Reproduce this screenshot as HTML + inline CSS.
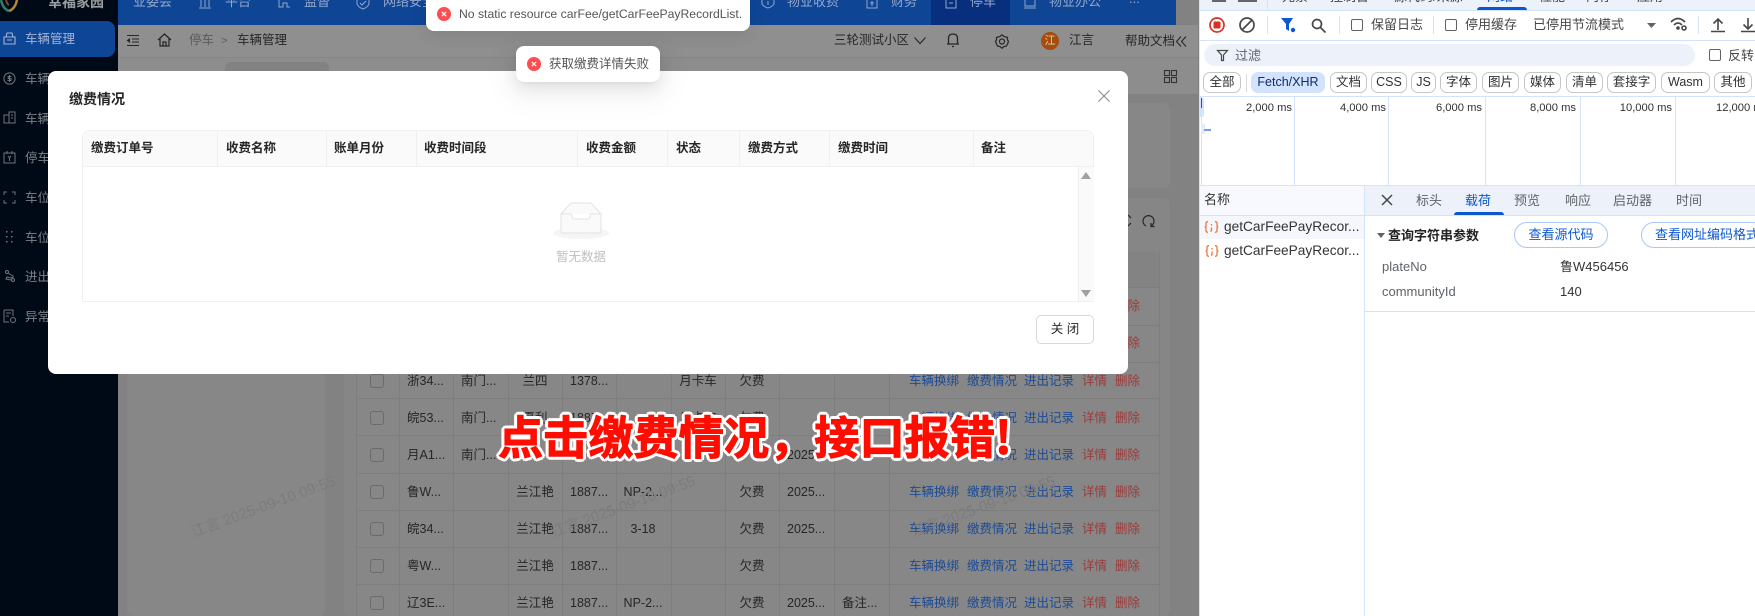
<!DOCTYPE html>
<html lang="zh"><head><meta charset="utf-8"><title>车辆管理</title>
<style>
*{box-sizing:border-box}
html,body{margin:0;padding:0;width:1755px;height:616px;overflow:hidden;background:#828282}
body{position:relative;font:12.5px/16px "Liberation Sans","Noto Sans CJK SC",sans-serif;color:#222}
.a,.t{position:absolute}
.t{white-space:nowrap;line-height:16px}
svg{position:absolute;overflow:visible}
.side{color:#7d8287;font-size:12.5px}
.nav{color:#93a7cc;font-size:13px}
.r{position:absolute;left:356px;width:803px;height:1px;background:#7d7d7d}
.v{position:absolute;top:252px;height:364px;width:1px;background:#7e7e7e}
.cell{color:#262626}
.ctr{transform:translateX(-50%)}
.b{color:#1b4b95}.d{color:#9c3a3a}
.cb{position:absolute;left:370px;width:14px;height:14px;border:1px solid #6b6b6b;border-radius:3px}
.wm{position:absolute;color:#7c7c7c;font-size:15px;transform:rotate(-20deg);transform-origin:0 0;white-space:nowrap}
.th{font-weight:bold;color:#262626;top:140px}
.vl{position:absolute;top:131px;height:35px;width:1px;background:#f0f0f0}
.dv{position:absolute;background:#d3e3fd}
.dt{font-size:13px;color:#474747}
.chip{position:absolute;top:72px;height:21px;border:1px solid #c4c7c5;border-radius:7px;text-align:center;line-height:19px;font-size:12.5px;color:#303030}
.ck{position:absolute;width:12px;height:12px;border:1.3px solid #5f6368;border-radius:2px}
.tl{position:absolute;top:97px;height:88px;width:1px;background:#d3e3fd}
.ms{position:absolute;top:100px;font-size:11.2px;color:#303030;text-align:right;width:90px;white-space:nowrap}
.tab{font-size:13px;color:#5f6368;top:193px}
.clip{color:#444;font-size:13px;top:-11px}
</style></head><body>

<!-- sidebar -->
<div class="a" style="left:0;top:0;width:118px;height:616px;background:#000a17"></div>
<svg style="left:0;top:0" width="20" height="14"><path d="M1 0Q3 9 9 11" stroke="#2e7d6b" stroke-width="2.5" fill="none"/><path d="M17 0Q15 9 9 11" stroke="#b28a2e" stroke-width="2.5" fill="none"/><path d="M6 0Q7 4 9 5" stroke="#7c4a34" stroke-width="2" fill="none"/></svg>
<div class="t" style="left:48px;top:-6px;font-weight:bold;font-size:14px;color:#9a9da0">幸福家园</div>
<div class="a" style="left:0;top:21px;width:115px;height:36px;background:#0e4595;border-radius:0 8px 8px 0"></div>
<svg style="left:3px;top:32px" width="13" height="14" fill="none" stroke="#a3b5d3" stroke-width="1.1"><path d="M3 5L4 1H9L10 5M1 5H12V12H1ZM4 8H9"/></svg>
<div class="t" style="left:25px;top:31px;color:#a3b5d3">车辆管理</div>
<svg style="left:3px;top:72px" width="13" height="13" fill="none" stroke="#6f7479"><circle cx="6.5" cy="6.5" r="5.6"/><path d="M8.5 4.5H5.2V6.5H8V8.5H4.5M6.5 3V10"/></svg>
<div class="t side" style="left:25px;top:71px">车辆</div>
<svg style="left:3px;top:111px" width="13" height="13" fill="none" stroke="#6f7479"><path d="M1 4H6V12H1ZM6 1H12V12H6ZM8 4H10M8 7H10"/></svg>
<div class="t side" style="left:25px;top:111px">车辆</div>
<svg style="left:3px;top:151px" width="13" height="13" fill="none" stroke="#6f7479"><path d="M1 2H12V12H1ZM4 0V3M9 0V3M5 5L6.5 7L8 5M6.5 7V10"/></svg>
<div class="t side" style="left:25px;top:150px">停车</div>
<svg style="left:3px;top:191px" width="13" height="13" fill="none" stroke="#6f7479"><path d="M1 4V1H4M9 1H12V4M1 9V12H4M9 12H12V9"/></svg>
<div class="t side" style="left:25px;top:190px">车位</div>
<svg style="left:6px;top:231px" width="8" height="12" fill="#6f7479"><rect x="0" y="0" width="1.5" height="1.5"/><rect x="5" y="0" width="1.5" height="1.5"/><rect x="0" y="5" width="1.5" height="1.5"/><rect x="5" y="5" width="1.5" height="1.5"/><rect x="0" y="10" width="1.5" height="1.5"/><rect x="5" y="10" width="1.5" height="1.5"/></svg>
<div class="t side" style="left:25px;top:230px">车位</div>
<svg style="left:4px;top:270px" width="12" height="12" fill="none" stroke="#6f7479"><circle cx="3" cy="2" r="1.5"/><circle cx="9" cy="10" r="1.5"/><path d="M4 3L9 6Q10 7 7 8L3 7L2 9L7 10"/></svg>
<div class="t side" style="left:25px;top:269px">进出</div>
<svg style="left:3px;top:310px" width="13" height="13" fill="none" stroke="#6f7479"><path d="M1 0H10V6M1 0V12H6M3 3H8M3 6H6"/><circle cx="10" cy="10" r="2.5"/></svg>
<div class="t side" style="left:25px;top:309px">异常</div>

<!-- top nav -->
<div class="a" style="left:118px;top:0;width:1058px;height:25px;background:#0e4595"></div>
<div class="a" style="left:931px;top:0;width:79px;height:25px;background:#072f7e"></div>
<div class="t nav" style="left:133px;top:-6px">业委会</div>
<svg style="left:199px;top:0" width="13" height="9" fill="none" stroke="#93a7cc"><path d="M2 0V7M6 0V7M10 0V7M0 8H12"/></svg>
<div class="t nav" style="left:225px;top:-6px">平台</div>
<svg style="left:278px;top:0" width="13" height="9" fill="none" stroke="#93a7cc"><path d="M1 0V7H5V3H9V7H12"/></svg>
<div class="t nav" style="left:304px;top:-6px">监督</div>
<svg style="left:357px;top:0" width="12" height="10" fill="none" stroke="#93a7cc"><path d="M0 0V4Q1 7 6 9Q11 7 12 4V0M3 3L5 5L9 1"/></svg>
<div class="t nav" style="left:383px;top:-6px">网络安全</div>
<svg style="left:762px;top:0" width="12" height="9" fill="none" stroke="#93a7cc"><path d="M0 0V4Q2 7 6 8Q10 7 12 4V0M6 1V5"/></svg>
<div class="t nav" style="left:787px;top:-6px">物业收费</div>
<svg style="left:866px;top:0" width="12" height="9" fill="none" stroke="#93a7cc"><path d="M1 0V8H11V0M6 1V6M4 3H8"/></svg>
<div class="t nav" style="left:891px;top:-6px">财务</div>
<svg style="left:945px;top:0" width="12" height="9" fill="none" stroke="#93a7cc"><path d="M1 0V8H11V0M4 3H8"/></svg>
<div class="t nav" style="left:970px;top:-6px">停车</div>
<svg style="left:1024px;top:0" width="13" height="9" fill="none" stroke="#93a7cc"><path d="M1 0V6H11V0M0 8H12"/></svg>
<div class="t nav" style="left:1049px;top:-6px">物业办公</div>
<div class="t nav" style="left:1129px;top:-9px">...</div>

<!-- header -->
<div class="a" style="left:118px;top:25px;width:1080px;height:32px;background:#8f8f8f"></div>
<div class="a" style="left:118px;top:57px;width:1080px;height:1px;background:#868686"></div>
<div class="a" style="left:118px;top:58px;width:1080px;height:36px;background:#8d8d8d"></div>
<div class="a" style="left:225px;top:62px;width:104px;height:32px;background:#828282;border-radius:6px 6px 0 0"></div>
<svg style="left:127px;top:35px" width="13" height="11" fill="none" stroke="#262626" stroke-width="1.1"><path d="M0 .5H12M5 4H12M5 7H12M0 10.5H12"/><path d="M3 3.5L.5 5.5L3 7.5" fill="#262626"/></svg>
<svg style="left:158px;top:33px" width="13" height="14" fill="none" stroke="#262626" stroke-width="1.2"><path d="M0 7L6.5 1L13 7M2 5.5V13H11V5.5M5 13V9H8V13"/></svg>
<div class="t" style="left:189px;top:32px;color:#5b5b5b">停车</div>
<div class="t" style="left:221px;top:33px;color:#5b5b5b;font-size:11px">&gt;</div>
<div class="t" style="left:237px;top:32px;color:#262626">车辆管理</div>
<div class="t" style="left:834px;top:32px;color:#262626">三轮测试小区</div>
<svg style="left:914px;top:37px" width="12" height="7" fill="none" stroke="#262626" stroke-width="1.1"><path d="M.5 .5L6 6.5L11.5 .5"/></svg>
<svg style="left:947px;top:33px" width="12" height="14" fill="none" stroke="#262626" stroke-width="1.3"><path d="M1.5 11V5.5Q1.5 1 6 1Q10.5 1 10.5 5.5V11ZM0 11H12M5 13.5H7"/></svg>
<svg style="left:995px;top:34px" width="14" height="15" fill="none" stroke="#262626" stroke-width="1.2"><path d="M7 .8L9 2.5L12.5 3.5L12.5 6L13.5 7.5L12.5 10L11.5 12L9 12.5L7 14.2L5 12.5L2.5 12L1.5 10L.5 7.5L1.5 6L1.5 3.5L5 2.5Z"/><circle cx="7" cy="7.5" r="2.5"/></svg>
<div class="a" style="left:1041px;top:32px;width:18px;height:18px;border-radius:50%;background:#a34e0e;color:#e3c9a8;font-size:11px;text-align:center;line-height:18px">江</div>
<div class="t" style="left:1069px;top:32px;color:#262626">江言</div>
<div class="t" style="left:1125px;top:33px;color:#262626">帮助文档</div>
<svg style="left:1176px;top:36px" width="11" height="11" fill="none" stroke="#262626" stroke-width="1.1"><path d="M5 .5L.5 5.5L5 10.5M10 .5L5.5 5.5L10 10.5"/></svg>
<svg style="left:1164px;top:70px" width="13" height="13" fill="none" stroke="#333" stroke-width="1.1"><rect x=".5" y=".5" width="5" height="5"/><rect x="7.5" y=".5" width="5" height="5"/><rect x=".5" y="7.5" width="5" height="5"/><rect x="7.5" y="7.5" width="5" height="5"/></svg>

<!-- content panels -->
<div class="a" style="left:118px;top:94px;width:1080px;height:522px;background:#828282"></div>
<div class="a" style="left:127px;top:103px;width:1043px;height:85px;background:#878787;border-radius:6px"></div>
<div class="a" style="left:127px;top:198px;width:198px;height:418px;background:#878787;border-radius:6px"></div>
<div class="a" style="left:344px;top:198px;width:826px;height:418px;background:#868686;border-radius:6px"></div>
<div class="a" style="left:356px;top:252px;width:803px;height:364px;background:#878787;border-radius:6px 6px 0 0"></div>
<div class="a" style="left:356px;top:252px;width:803px;height:35px;background:#838383;border-radius:6px 6px 0 0"></div>
<svg style="left:1142px;top:214px" width="13" height="13" fill="none" stroke="#262626" stroke-width="1.2"><path d="M4 12A5.5 5.5 0 1 1 9 12M9 9V12.5H12.5"/></svg>
<svg style="left:1128px;top:214px" width="6" height="13" fill="none" stroke="#262626" stroke-width="1.2"><path d="M0 1L3 4M0 12L3 9"/></svg>

<div class="r" style="top:287px"></div><div class="r" style="top:325px"></div><div class="r" style="top:362px"></div><div class="r" style="top:398px"></div><div class="r" style="top:435px"></div><div class="r" style="top:473px"></div><div class="r" style="top:510px"></div><div class="r" style="top:547px"></div><div class="r" style="top:584px"></div>
<div class="v" style="left:356px"></div><div class="v" style="left:399px"></div><div class="v" style="left:453px"></div><div class="v" style="left:508px"></div><div class="v" style="left:562px"></div><div class="v" style="left:616px"></div><div class="v" style="left:671px"></div><div class="v" style="left:725px"></div><div class="v" style="left:779px"></div><div class="v" style="left:834px"></div><div class="v" style="left:889px"></div><div class="v" style="left:1159px"></div>

<!-- row action fragments above modal edge -->
<div class="t d" style="left:1115px;top:298px">删除</div>
<div class="t d" style="left:1115px;top:335px">删除</div>

<!-- rows -->
<div class="cb" style="top:374px"></div>
<div class="t cell" style="left:407px;top:373px">浙34...</div><div class="t cell" style="left:461px;top:373px">南门...</div><div class="t cell ctr" style="left:535px;top:373px">兰四</div><div class="t cell" style="left:570px;top:373px">1378...</div><div class="t cell ctr" style="left:698px;top:373px">月卡车</div><div class="t cell ctr" style="left:752px;top:373px">欠费</div>
<div class="t b" style="left:909px;top:373px">车辆换绑</div><div class="t b" style="left:967px;top:373px">缴费情况</div><div class="t b" style="left:1024px;top:373px">进出记录</div><div class="t d" style="left:1082px;top:373px">详情</div><div class="t d" style="left:1115px;top:373px">删除</div>

<div class="cb" style="top:411px"></div>
<div class="t cell" style="left:407px;top:410px">皖53...</div><div class="t cell" style="left:461px;top:410px">南门...</div><div class="t cell ctr" style="left:535px;top:410px">夏利</div><div class="t cell" style="left:570px;top:410px">1887...</div><div class="t cell ctr" style="left:698px;top:410px">月卡车</div><div class="t cell ctr" style="left:752px;top:410px">欠费</div>
<div class="t b" style="left:909px;top:410px">车辆换绑</div><div class="t b" style="left:967px;top:410px">缴费情况</div><div class="t b" style="left:1024px;top:410px">进出记录</div><div class="t d" style="left:1082px;top:410px">详情</div><div class="t d" style="left:1115px;top:410px">删除</div>

<div class="cb" style="top:448px"></div>
<div class="t cell" style="left:407px;top:447px">月A1...</div><div class="t cell" style="left:461px;top:447px">南门...</div><div class="t cell" style="left:787px;top:447px">2025...</div>
<div class="t b" style="left:967px;top:447px">缴费情况</div><div class="t b" style="left:1024px;top:447px">进出记录</div><div class="t d" style="left:1082px;top:447px">详情</div><div class="t d" style="left:1115px;top:447px">删除</div>

<div class="cb" style="top:485px"></div>
<div class="t cell" style="left:407px;top:484px">鲁W...</div><div class="t cell ctr" style="left:535px;top:484px">兰江艳</div><div class="t cell" style="left:570px;top:484px">1887...</div><div class="t cell ctr" style="left:643px;top:484px">NP-2...</div><div class="t cell ctr" style="left:752px;top:484px">欠费</div><div class="t cell" style="left:787px;top:484px">2025...</div>
<div class="t b" style="left:909px;top:484px">车辆换绑</div><div class="t b" style="left:967px;top:484px">缴费情况</div><div class="t b" style="left:1024px;top:484px">进出记录</div><div class="t d" style="left:1082px;top:484px">详情</div><div class="t d" style="left:1115px;top:484px">删除</div>

<div class="cb" style="top:522px"></div>
<div class="t cell" style="left:407px;top:521px">皖34...</div><div class="t cell ctr" style="left:535px;top:521px">兰江艳</div><div class="t cell" style="left:570px;top:521px">1887...</div><div class="t cell ctr" style="left:643px;top:521px">3-18</div><div class="t cell ctr" style="left:752px;top:521px">欠费</div><div class="t cell" style="left:787px;top:521px">2025...</div>
<div class="t b" style="left:909px;top:521px">车辆换绑</div><div class="t b" style="left:967px;top:521px">缴费情况</div><div class="t b" style="left:1024px;top:521px">进出记录</div><div class="t d" style="left:1082px;top:521px">详情</div><div class="t d" style="left:1115px;top:521px">删除</div>

<div class="cb" style="top:559px"></div>
<div class="t cell" style="left:407px;top:558px">粤W...</div><div class="t cell ctr" style="left:535px;top:558px">兰江艳</div><div class="t cell" style="left:570px;top:558px">1887...</div><div class="t cell ctr" style="left:752px;top:558px">欠费</div>
<div class="t b" style="left:909px;top:558px">车辆换绑</div><div class="t b" style="left:967px;top:558px">缴费情况</div><div class="t b" style="left:1024px;top:558px">进出记录</div><div class="t d" style="left:1082px;top:558px">详情</div><div class="t d" style="left:1115px;top:558px">删除</div>

<div class="cb" style="top:596px"></div>
<div class="t cell" style="left:407px;top:595px">辽3E...</div><div class="t cell ctr" style="left:535px;top:595px">兰江艳</div><div class="t cell" style="left:570px;top:595px">1887...</div><div class="t cell ctr" style="left:643px;top:595px">NP-2...</div><div class="t cell ctr" style="left:752px;top:595px">欠费</div><div class="t cell" style="left:787px;top:595px">2025...</div><div class="t cell" style="left:842px;top:595px">备注...</div>
<div class="t b" style="left:909px;top:595px">车辆换绑</div><div class="t b" style="left:967px;top:595px">缴费情况</div><div class="t b" style="left:1024px;top:595px">进出记录</div><div class="t d" style="left:1082px;top:595px">详情</div><div class="t d" style="left:1115px;top:595px">删除</div>

<!-- watermarks -->
<div class="wm" style="left:189px;top:526px">江言 2025-09-10 09:55</div>
<div class="wm" style="left:549px;top:526px">江言 2025-09-10 09:55</div>
<div class="wm" style="left:909px;top:526px">江言 2025-09-10 09:55</div>

<!-- modal -->
<div class="a" style="left:48px;top:71px;width:1080px;height:303px;background:#fff;border-radius:8px"></div>
<div class="t" style="left:69px;top:91px;font-size:14px;font-weight:bold;color:#262626">缴费情况</div>
<svg style="left:1098px;top:90px" width="12" height="12" fill="none" stroke="#8c8c8c" stroke-width="1.1"><path d="M.5 .5L11.5 11.5M11.5 .5L.5 11.5"/></svg>
<div class="a" style="left:82px;top:130px;width:1012px;height:172px;border:1px solid #f0f0f0;border-radius:8px 8px 0 0"></div>
<div class="a" style="left:83px;top:131px;width:1010px;height:36px;background:#fafafa;border-radius:8px 8px 0 0;border-bottom:1px solid #f0f0f0"></div>
<div class="vl" style="left:217px"></div><div class="vl" style="left:326px"></div><div class="vl" style="left:416px"></div><div class="vl" style="left:577px"></div><div class="vl" style="left:667px"></div><div class="vl" style="left:739px"></div><div class="vl" style="left:829px"></div><div class="vl" style="left:973px"></div>
<div class="t th" style="left:91px">缴费订单号</div><div class="t th" style="left:226px">收费名称</div><div class="t th" style="left:334px">账单月份</div><div class="t th" style="left:424px">收费时间段</div><div class="t th" style="left:586px">收费金额</div><div class="t th" style="left:676px">状态</div><div class="t th" style="left:748px">缴费方式</div><div class="t th" style="left:838px">缴费时间</div><div class="t th" style="left:981px">备注</div>
<div class="a" style="left:1078px;top:167px;width:16px;height:134px;background:#fafafa;border-left:1px solid #f0f0f0"></div>
<svg style="left:1081px;top:172px" width="10" height="8"><path d="M5 0L10 7H0Z" fill="#a0a0a0"/></svg>
<svg style="left:1081px;top:290px" width="10" height="8"><path d="M0 0H10L5 7Z" fill="#a0a0a0"/></svg>
<svg style="left:552px;top:202px" width="58" height="38"><ellipse cx="29" cy="31" rx="28" ry="6" fill="#f5f5f5"/><path d="M19 1H39L49 12V29Q49 31 47 31H11Q9 31 9 29V12Z" fill="#fafafa" stroke="#e3e3e3"/><path d="M9 12H19Q20 12 20 14Q20 17 23 17H35Q38 17 38 14Q38 12 39 12H49" fill="#fff" stroke="#e3e3e3"/></svg>
<div class="t" style="left:556px;top:249px;color:#bfbfbf">暂无数据</div>
<div class="a" style="left:1036px;top:315px;width:58px;height:29px;border:1px solid #d9d9d9;border-radius:5px;text-align:center;line-height:27px;color:#262626;font-size:12.5px">关 闭</div>

<!-- toasts -->
<div class="a" style="left:426px;top:-10px;width:324px;height:41px;background:#fff;border-radius:8px;box-shadow:0 6px 16px rgba(0,0,0,.08)"></div>
<svg style="left:437px;top:7px" width="14" height="14"><circle cx="7" cy="7" r="7" fill="#ff4d4f"/><path d="M4.8 4.8L9.2 9.2M9.2 4.8L4.8 9.2" stroke="#fff" stroke-width="1.2"/></svg>
<div class="t" style="left:459px;top:6px;color:#555;font-size:12.2px">No static resource carFee/getCarFeePayRecordList.</div>
<div class="a" style="left:516px;top:46px;width:144px;height:36px;background:#fff;border-radius:8px;box-shadow:0 6px 16px rgba(0,0,0,.08),0 3px 6px -4px rgba(0,0,0,.12),0 9px 28px 8px rgba(0,0,0,.05)"></div>
<svg style="left:527px;top:57px" width="14" height="14"><circle cx="7" cy="7" r="7" fill="#ff4d4f"/><path d="M4.8 4.8L9.2 9.2M9.2 4.8L4.8 9.2" stroke="#fff" stroke-width="1.2"/></svg>
<div class="t" style="left:549px;top:56px;color:#555">获取缴费详情失败</div>

<!-- annotation -->
<div class="t" style="left:498px;top:409px;font:bold 45.2px/54px 'Noto Sans CJK SC',sans-serif;color:#ff0d00;-webkit-text-stroke:1px #ff0d00;text-shadow:3.5px 0 0 #fff,3.1px 1.7px 0 #fff,1.7px 3.1px 0 #fff,0 3.5px 0 #fff,-1.7px 3.1px 0 #fff,-3.1px 1.7px 0 #fff,-3.5px 0 0 #fff,-3.1px -1.7px 0 #fff,-1.7px -3.1px 0 #fff,0 -3.5px 0 #fff,1.7px -3.1px 0 #fff,3.1px -1.7px 0 #fff">点击缴费情况，接口报错!</div>

<!-- devtools -->
<div class="a" style="left:1199px;top:0;width:556px;height:616px;background:#fff;border-left:1px solid #d3e3fd;overflow:hidden"></div>
<div class="a" style="left:1200px;top:0;width:555px;height:10px;background:#edf2fa;overflow:hidden"></div>
<div class="dv" style="left:1200px;top:10px;width:555px;height:1px"></div>
<div class="t clip" style="left:1282px">元素</div><div class="t clip" style="left:1330px">控制台</div><div class="t clip" style="left:1394px">源代码/来源</div><div class="t clip" style="left:1487px;color:#0b57d0">网络</div><div class="t clip" style="left:1539px">性能</div><div class="t clip" style="left:1586px">内存</div><div class="t clip" style="left:1637px">应用</div>
<div class="a" style="left:1212px;top:0;width:14px;height:2px;background:#666"></div>
<div class="a" style="left:1238px;top:0;width:19px;height:2px;background:#666"></div>
<div class="dv" style="left:1267px;top:0;width:1px;height:10px"></div>
<div class="a" style="left:1477px;top:7px;width:50px;height:3px;background:#0b57d0;border-radius:3px 3px 0 0"></div>

<svg style="left:1209px;top:17px" width="16" height="16"><circle cx="8" cy="8" r="7" fill="none" stroke="#d93025" stroke-width="1.7"/><rect x="4.5" y="4.5" width="7" height="7" rx="1" fill="#d93025"/></svg>
<svg style="left:1239px;top:17px" width="16" height="16" fill="none" stroke="#474747" stroke-width="1.7"><circle cx="8" cy="8" r="7"/><path d="M3 13L13 3"/></svg>
<div class="dv" style="left:1267px;top:16px;width:1px;height:18px"></div>
<svg style="left:1281px;top:18px" width="15" height="15"><path d="M0 0H12L8 6V13L5 11V6Z" fill="#0b57d0"/><circle cx="12" cy="12" r="2.2" fill="#0b57d0"/></svg>
<svg style="left:1311px;top:18px" width="15" height="15" fill="none" stroke="#474747" stroke-width="1.7"><circle cx="6" cy="6" r="4.5"/><path d="M9.5 9.5L14.5 14.5"/></svg>
<div class="dv" style="left:1339px;top:16px;width:1px;height:18px"></div>
<div class="ck" style="left:1351px;top:19px"></div>
<div class="t dt" style="left:1371px;top:17px">保留日志</div>
<div class="dv" style="left:1433px;top:16px;width:1px;height:18px"></div>
<div class="ck" style="left:1445px;top:19px"></div>
<div class="t dt" style="left:1465px;top:17px">停用缓存</div>
<div class="t dt" style="left:1533px;top:17px">已停用节流模式</div>
<svg style="left:1647px;top:23px" width="10" height="6"><path d="M0 0H9L4.5 5Z" fill="#5f6368"/></svg>
<svg style="left:1670px;top:16px" width="18" height="16" fill="none" stroke="#474747" stroke-width="1.6"><path d="M1 6Q8 -1 15 6M4 9Q8 5 12 9"/><circle cx="8" cy="12" r="1" fill="#474747"/><circle cx="14" cy="12" r="2"/></svg>
<div class="dv" style="left:1698px;top:16px;width:1px;height:18px"></div>
<svg style="left:1711px;top:17px" width="14" height="16" fill="none" stroke="#474747" stroke-width="1.6"><path d="M7 13V2M2.5 6.5L7 2L11.5 6.5M0 14.5H14"/></svg>
<svg style="left:1741px;top:17px" width="14" height="16" fill="none" stroke="#474747" stroke-width="1.6"><path d="M7 1V12M2.5 7.5L7 12L11.5 7.5M0 14.5H14"/></svg>
<div class="dv" style="left:1200px;top:40px;width:555px;height:1px"></div>

<div class="a" style="left:1204px;top:44px;width:491px;height:22px;background:#edf2fa;border-radius:11px"></div>
<svg style="left:1217px;top:50px" width="11" height="11"><path d="M.5 .5H10.5L6.5 5V10.5H4.5V5Z" fill="none" stroke="#474747" stroke-width="1.2"/></svg>
<div class="t dt" style="left:1235px;top:48px;color:#5f6368">过滤</div>
<div class="ck" style="left:1709px;top:49px"></div>
<div class="t dt" style="left:1728px;top:48px">反转</div>

<div class="chip" style="left:1203px;width:38px">全部</div>
<div class="dv" style="left:1246px;top:74px;width:1px;height:18px;background:#d9d9d9"></div>
<div class="chip" style="left:1251px;width:74px;background:#d3e3fd;border-color:#d3e3fd;color:#0b2e6b">Fetch/XHR</div>
<div class="chip" style="left:1330px;width:37px">文档</div>
<div class="chip" style="left:1371px;width:36px">CSS</div>
<div class="chip" style="left:1411px;width:25px">JS</div>
<div class="chip" style="left:1440px;width:37px">字体</div>
<div class="chip" style="left:1482px;width:37px">图片</div>
<div class="chip" style="left:1524px;width:37px">媒体</div>
<div class="chip" style="left:1566px;width:37px">清单</div>
<div class="chip" style="left:1607px;width:49px">套接字</div>
<div class="chip" style="left:1661px;width:49px">Wasm</div>
<div class="chip" style="left:1714px;width:38px">其他</div>
<div class="dv" style="left:1200px;top:96px;width:555px;height:1px"></div>

<div class="tl" style="left:1201px"></div><div class="tl" style="left:1294px"></div><div class="tl" style="left:1388px"></div><div class="tl" style="left:1485px"></div><div class="tl" style="left:1580px"></div><div class="tl" style="left:1675px"></div>
<div class="ms" style="left:1202px">2,000 ms</div><div class="ms" style="left:1296px">4,000 ms</div><div class="ms" style="left:1392px">6,000 ms</div><div class="ms" style="left:1486px">8,000 ms</div><div class="ms" style="left:1582px">10,000 ms</div>
<div class="t" style="left:1716px;top:100px;color:#303030;font-size:11.2px">12,000 ms</div>
<div class="a" style="left:1200px;top:97px;width:4px;height:20px;background:#d3e3fd;border-radius:0 3px 3px 0"></div>
<div class="a" style="left:1201px;top:98px;width:1px;height:10px;background:#0b57d0"></div>
<div class="a" style="left:1201px;top:124px;width:4px;height:10px;background:#e3ecfd"></div>
<div class="a" style="left:1204px;top:129px;width:7px;height:2px;background:#6fa0ea"></div>
<div class="dv" style="left:1200px;top:185px;width:555px;height:1px"></div>

<div class="a" style="left:1200px;top:186px;width:165px;height:29px;background:#f8f9ff"></div>
<div class="a" style="left:1365px;top:186px;width:390px;height:29px;background:#edf2fa"></div>
<div class="dv" style="left:1200px;top:215px;width:555px;height:1px"></div>
<div class="dv" style="left:1364px;top:186px;width:1px;height:430px"></div>
<div class="t dt" style="left:1204px;top:192px;color:#333">名称</div>
<svg style="left:1381px;top:194px" width="12" height="12" fill="none" stroke="#474747" stroke-width="1.5"><path d="M1 1L11 11M11 1L1 11"/></svg>
<div class="t tab" style="left:1416px">标头</div><div class="t tab" style="left:1465px;color:#0b57d0">载荷</div><div class="t tab" style="left:1514px">预览</div><div class="t tab" style="left:1565px">响应</div><div class="t tab" style="left:1613px">启动器</div><div class="t tab" style="left:1676px">时间</div>
<div class="a" style="left:1454px;top:212px;width:50px;height:3px;background:#0b57d0;border-radius:3px 3px 0 0"></div>

<div class="a" style="left:1200px;top:216px;width:164px;height:23px;background:#f5f7fc"></div>
<svg style="left:1204px;top:221px" width="15" height="12" fill="none" stroke="#f0743a" stroke-width="1.3"><path d="M4 .7Q2 .7 2 2.5V4.5Q2 6 .7 6Q2 6 2 7.500V9.500Q2 11.300 4 11.300M11 .7Q13 .7 13 2.500V4.500Q13 6 14.300 6Q13 6 13 7.500V9.500Q13 11.300 11 11.300M7.500 3V4.500M7.500 6.500V9.500L6.500 10.500"/></svg>
<div class="t" style="left:1224px;top:219px;font-size:13.7px;color:#333">getCarFeePayRecor...</div>
<svg style="left:1205px;top:245px" width="14" height="12" fill="none" stroke="#f0743a" stroke-width="1.3"><path d="M4 .7Q2 .7 2 2.500V4.500Q2 6 .7 6Q2 6 2 7.500V9.500Q2 11.300 4 11.300M10 .7Q12 .7 12 2.500V4.500Q12 6 13.300 6Q12 6 12 7.500V9.500Q12 11.300 10 11.300M7 3V4.500M7 6.500V9.500L6 10.500"/></svg>
<div class="t" style="left:1224px;top:243px;font-size:13.7px;color:#333">getCarFeePayRecor...</div>

<svg style="left:1377px;top:233px" width="9" height="6"><path d="M0 0H8L4 5Z" fill="#5f6368"/></svg>
<div class="t" style="left:1388px;top:228px;font-weight:bold;font-size:13px;color:#222">查询字符串参数</div>
<div class="a" style="left:1514px;top:222px;width:94px;height:26px;border:1px solid #a8c7fa;border-radius:13px;color:#0b57d0;font-size:13px;text-align:center;line-height:24px">查看源代码</div>
<div class="a" style="left:1641px;top:222px;width:125px;height:26px;border:1px solid #a8c7fa;border-radius:13px;color:#0b57d0;font-size:13px;line-height:24px;padding-left:13px;white-space:nowrap">查看网址编码格式</div>
<div class="t" style="left:1382px;top:259px;color:#5f6368;font-size:13px">plateNo</div>
<div class="t" style="left:1560px;top:259px;color:#333;font-size:13px">鲁W456456</div>
<div class="t" style="left:1382px;top:284px;color:#5f6368;font-size:13px">communityId</div>
<div class="t" style="left:1560px;top:284px;color:#333;font-size:13px">140</div>
<div class="dv" style="left:1365px;top:311px;width:390px;height:1px"></div>

</body></html>
